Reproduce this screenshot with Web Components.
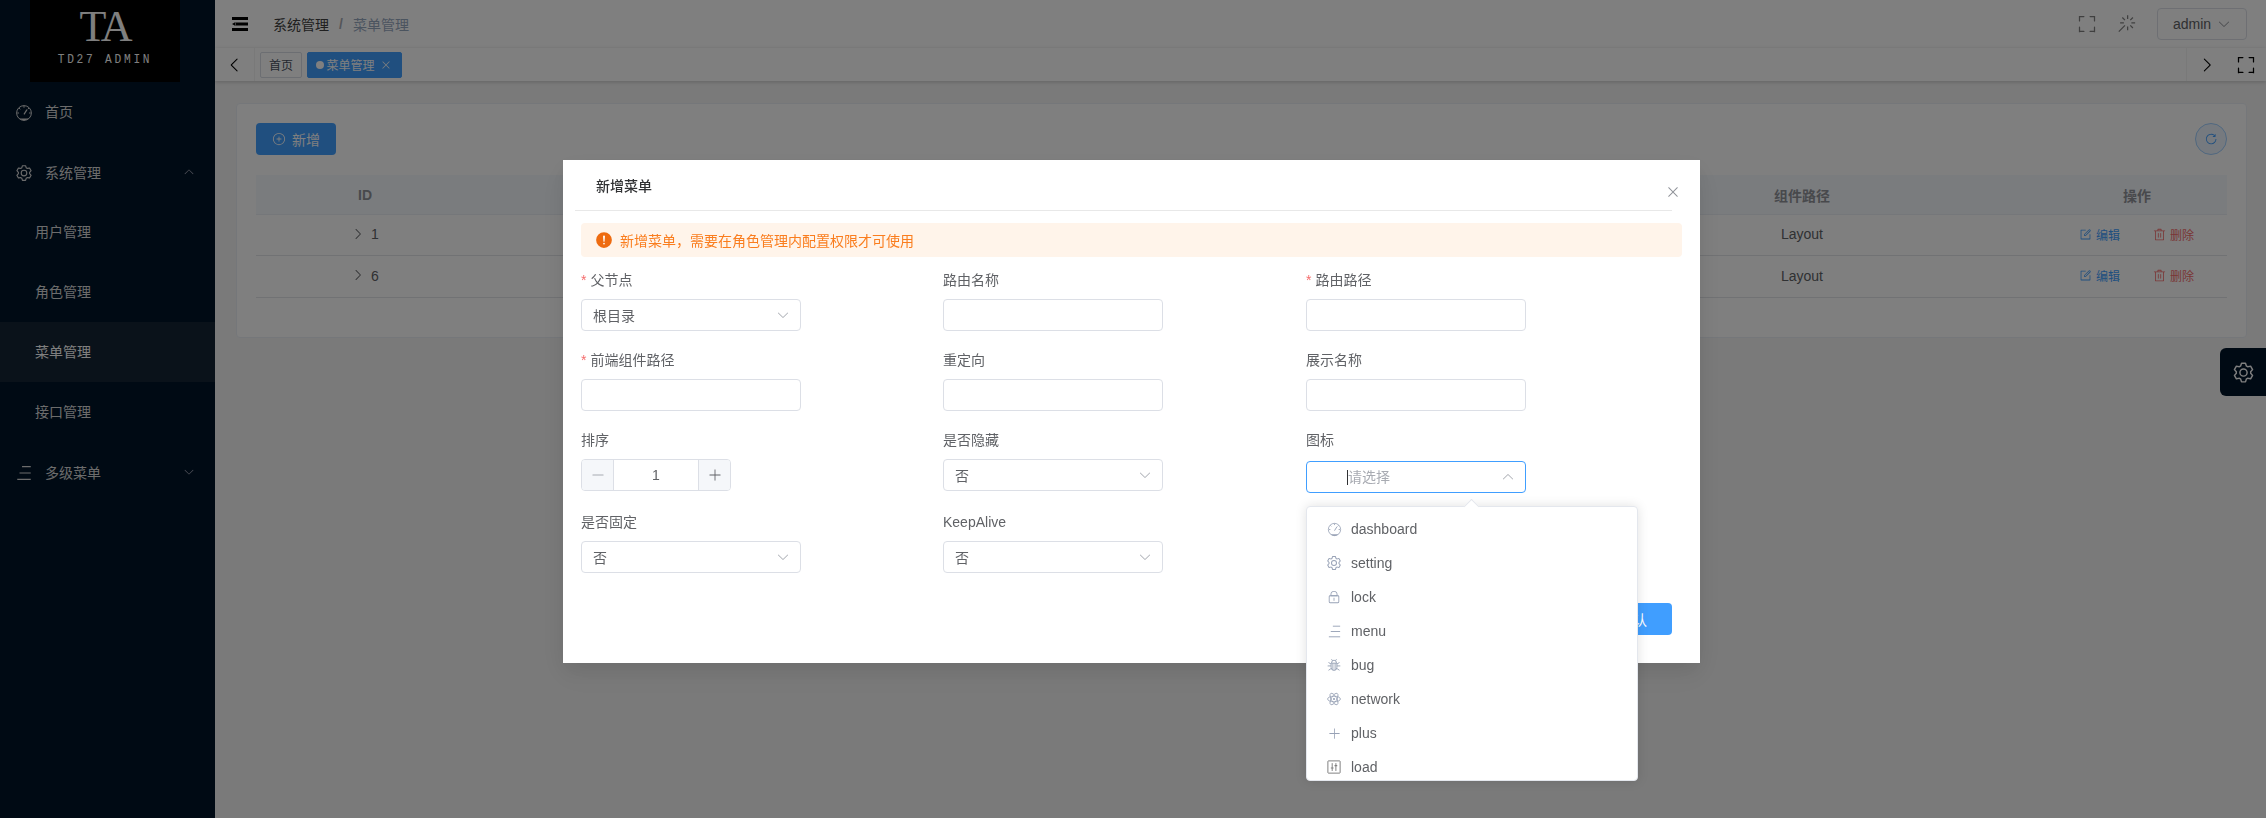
<!DOCTYPE html>
<html lang="zh">
<head>
<meta charset="utf-8">
<title>菜单管理</title>
<style>
  html, body { margin: 0; height: 818px; overflow: hidden; background: #f5f5f5; }
  body { font: 14px "Liberation Sans", "Noto Sans CJK SC", sans-serif; color: #606266; }
</style>
</head>
<body>
<app-shell>
  <side-menu slot="side"></side-menu>
  <nav-bar slot="main"></nav-bar>
  <tab-strip slot="main"></tab-strip>
  <menu-table slot="main"></menu-table>
</app-shell>
<settings-tab></settings-tab>
<modal-layer>
  <form-field label="父节点" required><select-box value="根目录"></select-box></form-field>
  <form-field label="路由名称"><text-box></text-box></form-field>
  <form-field label="路由路径" required><text-box></text-box></form-field>
  <form-field label="前端组件路径" required><text-box></text-box></form-field>
  <form-field label="重定向"><text-box></text-box></form-field>
  <form-field label="展示名称"><text-box></text-box></form-field>
  <form-field label="排序" tall><number-box value="1"></number-box></form-field>
  <form-field label="是否隐藏" tall><select-box value="否"></select-box></form-field>
  <form-field label="图标" tall><select-box placeholder="请选择" open></select-box></form-field>
  <form-field label="是否固定"><select-box value="否"></select-box></form-field>
  <form-field label="KeepAlive"><select-box value="否"></select-box></form-field>
</modal-layer>
<script>
const ICONS = {
  odometer: `<g fill="none" stroke="currentColor" stroke-width="56"><circle cx="512" cy="512" r="420"/><path d="M512 100v110M130 512h100M794 512h100M230 230l70 70M794 230l-70 70"/><path stroke-width="64" d="M512 590 680 320"/></g><path d="M238 830a420 420 0 0 0 548 0z"/>`,
  setting: `<path d="M600.704 64a32 32 0 0 1 30.464 22.208l35.2 109.376c14.784 7.232 28.928 15.36 42.432 24.512l112.384-24.192a32 32 0 0 1 34.432 15.36L944.32 364.8a32 32 0 0 1-4.032 37.504l-77.12 85.12a357.12 357.12 0 0 1 0 49.024l77.12 85.248a32 32 0 0 1 4.032 37.504l-88.704 153.6a32 32 0 0 1-34.432 15.296L708.8 803.904c-13.44 9.088-27.648 17.28-42.368 24.512l-35.264 109.376A32 32 0 0 1 600.704 960H423.296a32 32 0 0 1-30.464-22.208L357.696 828.48a351.616 351.616 0 0 1-42.56-24.64l-112.32 24.256a32 32 0 0 1-34.432-15.36L79.68 659.2a32 32 0 0 1 4.032-37.504l77.12-85.248a357.12 357.12 0 0 1 0-48.896l-77.12-85.248A32 32 0 0 1 79.68 364.8l88.704-153.6a32 32 0 0 1 34.432-15.296l112.32 24.256c13.568-9.152 27.776-17.408 42.56-24.64l35.2-109.312A32 32 0 0 1 423.232 64H600.64zm-23.424 64H446.72l-36.352 113.088-24.512 11.968a294.113 294.113 0 0 0-34.816 20.096l-22.656 15.36-116.224-25.088-65.28 113.152 79.68 88.192-1.92 27.136a293.12 293.12 0 0 0 0 40.192l1.92 27.136-79.808 88.192 65.344 113.152 116.224-25.024 22.656 15.296a294.113 294.113 0 0 0 34.816 20.096l24.512 11.968L446.72 896h130.688l36.48-113.152 24.448-11.904a288.282 288.282 0 0 0 34.752-20.096l22.592-15.296 116.288 25.024 65.28-113.152-79.744-88.192 1.92-27.136a293.12 293.12 0 0 0 0-40.256l-1.92-27.136 79.808-88.128-65.344-113.152-116.288 24.96-22.592-15.232a287.616 287.616 0 0 0-34.752-20.096l-24.448-11.904L577.344 128zM512 320a192 192 0 1 1 0 384 192 192 0 0 1 0-384zm0 64a128 128 0 1 0 0 256 128 128 0 0 0 0-256z"/>`,
  down: `<path d="M831.872 340.864 512 652.672 192.128 340.864a30.592 30.592 0 0 0-42.752 0 29.12 29.12 0 0 0 0 41.6L489.664 714.24a32 32 0 0 0 44.672 0l340.288-331.712a29.12 29.12 0 0 0 0-41.728 30.592 30.592 0 0 0-42.752 0z"/>`,
  up: `<path transform="rotate(180 512 512)" d="M831.872 340.864 512 652.672 192.128 340.864a30.592 30.592 0 0 0-42.752 0 29.12 29.12 0 0 0 0 41.6L489.664 714.24a32 32 0 0 0 44.672 0l340.288-331.712a29.12 29.12 0 0 0 0-41.728 30.592 30.592 0 0 0-42.752 0z"/>`,
  left: `<path d="M609.408 149.376 277.76 489.6a32 32 0 0 0 0 44.672l331.648 340.352a29.12 29.12 0 0 0 41.728 0 30.592 30.592 0 0 0 0-42.752L339.264 511.936l311.872-319.872a30.592 30.592 0 0 0 0-42.688 29.12 29.12 0 0 0-41.728 0z"/>`,
  right: `<path d="M340.864 149.312a30.592 30.592 0 0 0 0 42.752L652.736 512 340.864 831.872a30.592 30.592 0 0 0 0 42.752 29.12 29.12 0 0 0 41.728 0L714.24 534.336a32 32 0 0 0 0-44.672L382.592 149.376a29.12 29.12 0 0 0-41.728 0z"/>`,
  close: `<path d="M764.288 214.592 512 466.88 259.712 214.592a31.936 31.936 0 0 0-45.12 45.12L466.752 512 214.528 764.224a31.936 31.936 0 1 0 45.12 45.184L512 557.184l252.288 252.288a31.936 31.936 0 0 0 45.12-45.12L557.12 512.064l252.288-252.352a31.936 31.936 0 1 0-45.12-45.184z"/>`,
  full: `<path d="m160 96.064 192 .192a32 32 0 0 1 0 64l-192-.192V352a32 32 0 0 1-64 0V96h64v.064zm0 831.872V928H96V672a32 32 0 1 1 64 0v191.936l192-.192a32 32 0 1 1 0 64l-192 .192zM864 96.064V96h64v256a32 32 0 1 1-64 0V160.064l-192 .192a32 32 0 1 1 0-64l192-.192zm0 831.872-192-.192a32 32 0 0 1 0-64l192 .192V672a32 32 0 1 1 64 0v256h-64v-.064z"/>`,
  wand: `<path d="M512 64h64v192h-64V64zm0 576h64v192h-64V640zM160 480v-64h192v64H160zm576 0v-64h192v64H736zM249.856 199.04l45.248-45.184L430.848 289.6 385.6 334.848 249.856 199.104zM657.152 606.4l45.248-45.248 135.744 135.744-45.248 45.248L657.152 606.4zM114.048 923.2 68.8 877.952l316.8-316.8 45.248 45.248-316.8 316.8zM702.4 334.848 657.152 289.6l135.744-135.744 45.248 45.248L702.4 334.848z"/>`,
  circleplus: `<path d="M352 480h320a32 32 0 1 1 0 64H352a32 32 0 0 1 0-64z"/><path d="M480 672V352a32 32 0 1 1 64 0v320a32 32 0 0 1-64 0z"/><path d="M512 896a384 384 0 1 0 0-768 384 384 0 0 0 0 768zm0 64a448 448 0 1 1 0-896 448 448 0 0 1 0 896z"/>`,
  refresh: `<path d="M784.512 230.272v-50.56a32 32 0 1 1 64 0v149.056a32 32 0 0 1-32 32H667.52a32 32 0 1 1 0-64h92.992A320 320 0 1 0 524.8 833.152a320 320 0 0 0 320-320h64a384 384 0 0 1-384 384 384 384 0 0 1-384-384 384 384 0 0 1 643.712-282.88z"/>`,
  edit: `<path d="M832 512a32 32 0 1 1 64 0v352a32 32 0 0 1-32 32H160a32 32 0 0 1-32-32V160a32 32 0 0 1 32-32h352a32 32 0 0 1 0 64H192v640h640V512z"/><path d="m469.952 554.24 52.8-7.552L847.104 222.4a32 32 0 1 0-45.248-45.248L477.44 501.44l-7.552 52.8zm422.4-422.4a96 96 0 0 1 0 135.808l-331.84 331.84a32 32 0 0 1-18.112 9.088L436.8 623.68a32 32 0 0 1-36.224-36.224l15.104-105.6a32 32 0 0 1 9.024-18.112l331.904-331.84a96 96 0 0 1 135.744 0z"/>`,
  trash: `<path d="M160 256H96a32 32 0 0 1 0-64h256V95.936a32 32 0 0 1 32-32h256a32 32 0 0 1 32 32V192h256a32 32 0 1 1 0 64h-64v672a32 32 0 0 1-32 32H192a32 32 0 0 1-32-32V256zm448-64v-64H416v64h192zM224 896h576V256H224v640zm192-128a32 32 0 0 1-32-32V416a32 32 0 0 1 64 0v320a32 32 0 0 1-32 32zm192 0a32 32 0 0 1-32-32V416a32 32 0 0 1 64 0v320a32 32 0 0 1-32 32z"/>`,
  lock: `<path d="M224 448a32 32 0 0 0-32 32v384a32 32 0 0 0 32 32h576a32 32 0 0 0 32-32V480a32 32 0 0 0-32-32H224zm0-64h576a96 96 0 0 1 96 96v384a96 96 0 0 1-96 96H224a96 96 0 0 1-96-96V480a96 96 0 0 1 96-96z"/><path d="M512 544a32 32 0 0 1 32 32v192a32 32 0 1 1-64 0V576a32 32 0 0 1 32-32zm192-160v-64a192 192 0 1 0-384 0v64h384zM512 64a256 256 0 0 1 256 256v128H256V320A256 256 0 0 1 512 64z"/>`,
  plus: `<path d="M480 480V128a32 32 0 0 1 64 0v352h352a32 32 0 0 1 0 64H544v352a32 32 0 1 1-64 0V544H128a32 32 0 0 1 0-64h352z"/>`,
  minus: `<path d="M128 544h768a32 32 0 1 0 0-64H128a32 32 0 0 0 0 64z"/>`,
  warning: `<path d="M512 64a448 448 0 1 1 0 896 448 448 0 0 1 0-896zm0 192a58.432 58.432 0 0 0-58.24 63.744l23.36 256.384a35.072 35.072 0 0 0 69.76 0l23.296-256.384A58.432 58.432 0 0 0 512 256zm0 512a51.2 51.2 0 1 0 0-102.4 51.2 51.2 0 0 0 0 102.4z"/>`,
  menu: `<path fill="none" stroke="currentColor" stroke-width="64" d="M400 150H896M256 512H896M128 874H896"/>`,
  bug: `<g fill="none" stroke="currentColor" stroke-width="68"><path d="M300 380h424v300a212 230 0 0 1-424 0z"/><path d="M330 380a182 220 0 0 1 364 0M430 380v500M594 380v500M300 580H50M724 580h250M300 440 110 330M724 440l190-110M310 760 110 900M714 760l200 140M400 200 330 90M624 200l70-110"/></g>`,
  network: `<g fill="none" stroke="currentColor" stroke-width="60"><ellipse cx="512" cy="512" rx="470" ry="200"/><ellipse cx="512" cy="512" rx="470" ry="200" transform="rotate(60 512 512)"/><ellipse cx="512" cy="512" rx="470" ry="200" transform="rotate(120 512 512)"/></g><circle cx="512" cy="512" r="80"/>`,
  load: `<g fill="none" stroke="currentColor" stroke-width="72"><rect x="64" y="64" width="896" height="896" rx="40"/><path d="M380 230V800M650 230V800"/></g><path d="M280 540h200v90H280zM550 370h200v90H550z"/>`
};

class UiIcon extends HTMLElement {
  connectedCallback() {
    const size = this.getAttribute("size") || 14;
    this.attachShadow({ mode: "open" }).innerHTML = `
      <style>:host { display: inline-flex; flex: none; } svg { display: block; fill: currentColor; }</style>
      <svg width="${size}" height="${size}" viewBox="0 0 1024 1024">${ICONS[this.getAttribute("name")]}</svg>`;
  }
}
customElements.define("ui-icon", UiIcon);

const shellTemplate = document.createElement("template");
shellTemplate.innerHTML = `
  <style>
    :host { display: flex; height: 818px; }
    .side { width: 215px; flex: none; background: #001529; }
    .main { flex: 1; min-width: 0; display: flex; flex-direction: column; }
  </style>
  <div class="side"><slot name="side"></slot></div>
  <div class="main"><slot name="main"></slot></div>`;
class AppShell extends HTMLElement {
  connectedCallback() {
    this.attachShadow({ mode: "open" }).appendChild(shellTemplate.content.cloneNode(true));
  }
}
customElements.define("app-shell", AppShell);

class SideMenu extends HTMLElement {
  connectedCallback() {
    const rows = [
      ["odometer", "首页", "", false, false],
      ["setting", "系统管理", "up", false, false],
      ["", "用户管理", "", true, false],
      ["", "角色管理", "", true, false],
      ["", "菜单管理", "", true, true],
      ["", "接口管理", "", true, false],
      ["menu", "多级菜单", "down", false, false]
    ];
    this.attachShadow({ mode: "open" }).innerHTML = `
      <style>
        :host { display: block; }
        .logo { width: 150px; height: 82px; margin-left: 30px; background: #000; color: #fff;
          display: flex; flex-direction: column; align-items: center; overflow: hidden; }
        .ta { font: 44px/34px "Liberation Serif", serif; margin-top: 10px; letter-spacing: -2px; }
        .sub { font: 13px/14px "Liberation Mono", monospace; letter-spacing: 3.2px; margin-top: 9px; transform: scaleX(.86); white-space: nowrap; }
        .row { height: 60px; display: flex; align-items: center; color: #d8d8d8; position: relative; }
        .row span { position: relative; top: -1px; }
        .row.drop span { top: 0; }
        .row ui-icon { margin: 2px 12px 0 15px; }
        .row.sub-row { padding-left: 35px; }
        .row.on { background: #142434; color: #fff; }
        .row .arrow { margin: 0; position: absolute; right: 20px; top: 24px; color: #aab; }
      </style>
      <div class="logo"><div class="ta">TA</div><div class="sub">TD27 ADMIN</div></div>
      ${rows.map(([icon, text, arrow, sub, on]) => `
        <div class="row ${sub ? "sub-row" : ""} ${on ? "on" : ""} ${arrow ? "drop" : ""}">
          ${icon ? `<ui-icon name="${icon}" size="18"></ui-icon>` : ""}
          <span>${text}</span>
          ${arrow ? `<ui-icon class="arrow" name="${arrow}" size="12"></ui-icon>` : ""}
        </div>`).join("")}`;
  }
}
customElements.define("side-menu", SideMenu);

class NavBar extends HTMLElement {
  connectedCallback() {
    this.attachShadow({ mode: "open" }).innerHTML = `
      <style>
        :host { display: flex; height: 48px; align-items: center; background: #fff; padding: 0 19px 0 17px; }
        .fold { margin-right: 25px; }
        .fold svg { display: block; }
        .now { color: #404040; }
        .sep { margin: 0 10px; color: #a8abb2; font-weight: 700; }
        .last { color: #97a8be; }
        .gap { flex: 1; }
        .tool { color: #808080; }
        .user { width: 90px; height: 32px; box-sizing: border-box; border: 1px solid #dcdfe6; border-radius: 4px;
          display: flex; align-items: center; justify-content: center; gap: 6px; margin-left: 20px; color: #606266; }
      </style>
      <div class="fold"><svg width="16" height="14" viewBox="0 0 16 14"><path fill="#000" d="M0 0h16v3H0zM0 11h16v3H0zM4 5.500h12v3H4zM0 7l3.500-2v4z"/></svg></div>
      <span class="now">系统管理</span><span class="sep">/</span><span class="last">菜单管理</span>
      <span class="gap"></span>
      <ui-icon class="tool" name="full" size="20" style="margin-right:20px"></ui-icon>
      <ui-icon class="tool" name="wand" size="20"></ui-icon>
      <div class="user">admin<ui-icon name="down" size="14" style="color:#909399"></ui-icon></div>`;
  }
}
customElements.define("nav-bar", NavBar);

class TabStrip extends HTMLElement {
  connectedCallback() {
    this.attachShadow({ mode: "open" }).innerHTML = `
      <style>
        :host { display: flex; height: 33px; align-items: center; background: #fff; font-size: 12px;
          box-shadow: 0 1px 4px rgba(0,0,0,.2); position: relative; }
        .end { width: 40px; height: 33px; display: flex; align-items: center; justify-content: center; color: #000; flex: none; }
        .end.l { border-right: 1px solid #f2f2f2; box-sizing: border-box; margin-right: 5px; }
        .tab { height: 26px; box-sizing: border-box; border: 1px solid #d8dce5; display: flex; align-items: center;
          justify-content: center; width: 42px; margin-right: 5px; color: #495060; border-radius: 2px; }
        .tab.on { width: 95px; background: #409eff; border-color: #409eff; color: #fff; }
        .dot { width: 8px; height: 8px; border-radius: 50%; background: #fff; margin-right: 2px; }
        .gap { flex: 1; }
        .end.r { border-left: 1px solid #f2f2f2; box-sizing: border-box; }
      </style>
      <div class="end l"><ui-icon name="left" size="18"></ui-icon></div>
      <div class="tab">首页</div>
      <div class="tab on"><span class="dot"></span>菜单管理<ui-icon name="close" size="12" style="margin-left:5px;margin-right:1px"></ui-icon></div>
      <span class="gap"></span>
      <div class="end r"><ui-icon name="right" size="18"></ui-icon></div>
      <div class="end"><ui-icon name="full" size="20"></ui-icon></div>`;
  }
}
customElements.define("tab-strip", TabStrip);

class MenuTable extends HTMLElement {
  connectedCallback() {
    const row = (id, h) => `
      <div class="row" style="height:${h}px">
        <div class="c id"><ui-icon name="right" size="14"></ui-icon><span>${id}</span></div>
        <div></div>
        <div class="c"><span>Layout</span></div>
        <div class="c ops">
          <span class="op blue"><ui-icon name="edit" size="13"></ui-icon>编辑</span>
          <span class="op red"><ui-icon name="trash" size="13"></ui-icon>删除</span>
        </div>
      </div>`;
    this.attachShadow({ mode: "open" }).innerHTML = `
      <style>
        :host { display: block; margin: 22px 19px 0 21px; background: #fff; border: 1px solid #ebeef5; border-radius: 4px;
          box-sizing: border-box; height: 235px; padding: 19px 19px 0; }
        .top { display: flex; justify-content: space-between; align-items: center; margin-bottom: 20px; }
        .add { width: 80px; height: 32px; border-radius: 4px; background: #409eff; color: #fff; display: flex;
          align-items: center; justify-content: center; gap: 6px; }
        .reload { width: 32px; height: 32px; box-sizing: border-box; border: 1px solid #a0cfff; background: #ecf5ff;
          border-radius: 50%; color: #409eff; display: flex; align-items: center; justify-content: center; }
        .row { display: grid; grid-template-columns: 218px 1fr 490px 180px; border-bottom: 1px solid #e2e4e8; box-sizing: border-box; }
        .head { height: 40px; background: #f5f8fd; font-weight: 700; border-bottom-color: #ebeef5; }
        .c { display: flex; align-items: center; justify-content: center; color: #606266; }
        .c span { position: relative; top: -1px; }
        .head .c { color: #909399; }
        .id { gap: 6px; }
        .id ui-icon { margin-top: -3px; }
        .ops { gap: 33px; font-size: 12px; justify-content: flex-start; padding-left: 32px; }
        .op { display: flex; align-items: center; gap: 4px; }
        .blue { color: #409eff; }
        .red { color: #f56c6c; }
      </style>
      <div class="top">
        <div class="add"><ui-icon name="circleplus" size="14"></ui-icon>新增</div>
        <div class="reload"><ui-icon name="refresh" size="14"></ui-icon></div>
      </div>
      <div class="row head"><div class="c">ID</div><div></div><div class="c">组件路径</div><div class="c">操作</div></div>
      ${row(1, 41)}${row(6, 42)}`;
  }
}
customElements.define("menu-table", MenuTable);

class SettingsTab extends HTMLElement {
  connectedCallback() {
    this.attachShadow({ mode: "open" }).innerHTML = `
      <style>
        :host { position: fixed; right: 0; top: 348px; width: 46px; height: 48px; background: #001529; color: #fff;
          border-radius: 6px 0 0 6px; display: flex; align-items: center; justify-content: center; }
      </style>
      <ui-icon name="setting" size="23"></ui-icon>`;
  }
}
customElements.define("settings-tab", SettingsTab);

class FormField extends HTMLElement {
  connectedCallback() {
    const star = this.hasAttribute("required") ? `<i>*</i>` : "";
    this.attachShadow({ mode: "open" }).innerHTML = `
      <style>
        :host { display: block; margin-bottom: ${this.hasAttribute("tall") ? 20 : 18}px; }
        label { display: block; height: 22px; line-height: 22px; margin-bottom: 8px; color: #606266; white-space: nowrap; }
        i { font-style: normal; color: #f56c6c; margin-right: 4px; }
      </style>
      <label>${star}${this.getAttribute("label")}</label>
      <slot></slot>`;
  }
}
customElements.define("form-field", FormField);

class SelectBox extends HTMLElement {
  connectedCallback() {
    const open = this.hasAttribute("open");
    const value = this.getAttribute("value");
    this.attachShadow({ mode: "open" }).innerHTML = `
      <style>
        :host { display: flex; width: 220px; height: 32px; box-sizing: border-box; border: 1px solid ${open ? "#409eff" : "#dcdfe6"};
          border-radius: 4px; align-items: center; padding: ${open ? "0 10px 0 40px" : "0 10px 0 11px"}; background: #fff;
          ${open ? "margin: 10px 0 -2px;" : ""} }
        .v { flex: 1; color: #606266; }
        .p { color: #a8abb2; border-left: 1px solid #303133; line-height: 15px; height: 15px; display: inline-flex; align-items: center; }
        ui-icon { color: #a8abb2; }
      </style>
      <span class="v">${value ? value : `<span class="p">${this.getAttribute("placeholder")}</span>`}</span>
      <ui-icon name="${open ? "up" : "down"}" size="14"></ui-icon>`;
  }
}
customElements.define("select-box", SelectBox);

class TextBox extends HTMLElement {
  connectedCallback() {
    this.attachShadow({ mode: "open" }).innerHTML = `
      <style>
        :host { display: block; width: 220px; height: 32px; box-sizing: border-box; border: 1px solid #dcdfe6; border-radius: 4px; background: #fff; }
      </style>`;
  }
}
customElements.define("text-box", TextBox);

class NumberBox extends HTMLElement {
  connectedCallback() {
    this.attachShadow({ mode: "open" }).innerHTML = `
      <style>
        :host { display: flex; width: 150px; height: 32px; box-sizing: border-box; border: 1px solid #dcdfe6; border-radius: 4px; overflow: hidden; }
        .b { width: 32px; box-sizing: border-box; background: #f5f7fa; display: flex; align-items: center; justify-content: center; flex: none; color: #606266; }
        .b.m { border-right: 1px solid #dcdfe6; color: #a8abb2; }
        .b.p { border-left: 1px solid #dcdfe6; }
        .n { flex: 1; text-align: center; line-height: 30px; color: #606266; }
      </style>
      <div class="b m"><ui-icon name="minus" size="14"></ui-icon></div>
      <div class="n">${this.getAttribute("value")}</div>
      <div class="b p"><ui-icon name="plus" size="14"></ui-icon></div>`;
  }
}
customElements.define("number-box", NumberBox);

class ModalLayer extends HTMLElement {
  connectedCallback() {
    const options = [["dashboard", "odometer", 15, "#98a2b6"], ["setting", "setting", 16, "#98a2b6"], ["lock", "lock", 14, "#98a2b6"], ["menu", "menu", 15, "#98a2b6"],
      ["bug", "bug", 14, "#98a2b6"], ["network", "network", 14, "#98a2b6"], ["plus", "plus", 13, "#98a2b6"], ["load", "load", 14, "#808080"]];
    this.attachShadow({ mode: "open" }).innerHTML = `
      <style>
        :host { position: fixed; inset: 0; background: rgba(0,0,0,.5); display: block; }
        .dlg { position: absolute; left: 563px; top: 160px; width: 1137px; height: 503px; background: #fff; box-sizing: border-box;
          box-shadow: 0 12px 32px 4px rgba(0,0,0,.04), 0 8px 20px rgba(0,0,0,.08); display: flex; flex-direction: column; }
        .head { margin: 0 28px 0 12px; height: 50.500px; box-sizing: border-box; border-bottom: 1px solid #e8e8e8; padding-left: 21px;
          display: flex; align-items: center; font-weight: 500; color: #303133; }
        .x { position: absolute; left: 1102px; top: 24px; color: #909399; }
        .body { padding: 12.500px 18px 0; flex: 1; }
        .alert { height: 34px; background: #fff4ea; border-radius: 4px; display: flex; align-items: center; gap: 7px; padding-left: 14px;
          color: #fa7d1e; margin-bottom: 12px; }
        .alert ui-icon { color: #ee6b10; }
        .grid { display: grid; grid-template-columns: 362px 363px 362px; }
        .foot { display: flex; justify-content: flex-end; padding: 0 28px 28px; }
        .ok { width: 68px; height: 32px; box-sizing: border-box; border-radius: 4px; background: #409eff; color: #fff; display: flex; align-items: center;
          justify-content: flex-end; padding-right: 25px; white-space: pre; }
        .drop { position: absolute; left: 1306px; top: 506px; width: 332px; height: 275px; background: #fff; border: 1px solid #e4e7ed; box-sizing: border-box;
          border-radius: 4px; box-shadow: 0 0 12px rgba(0,0,0,.12); }
        .drop::before { content: ""; position: absolute; left: 159px; top: -6px; width: 10px; height: 10px; background: #fff;
          border: 1px solid #e4e7ed; border-right: 0; border-bottom: 0; transform: rotate(45deg); }
        .list { position: relative; height: 273px; overflow: hidden; padding-top: 5px; box-sizing: border-box; }
        .opt { height: 34px; display: flex; align-items: center; padding-left: 19px; color: #606266; }
        .ic { width: 16px; display: flex; justify-content: center; margin-right: 9px; }
      </style>
      <div class="dlg">
        <div class="head">新增菜单</div>
        <ui-icon class="x" name="close" size="16"></ui-icon>
        <div class="body">
          <div class="alert"><ui-icon name="warning" size="18"></ui-icon>新增菜单，需要在角色管理内配置权限才可使用</div>
          <div class="grid"><slot></slot></div>
        </div>
        <div class="foot"><div class="ok">确 认</div></div>
      </div>
      <div class="drop"><div class="list">
        ${options.map(([t, i, s, c]) => `<div class="opt"><span class="ic" style="color:${c}"><ui-icon name="${i}" size="${s}"></ui-icon></span>${t}</div>`).join("")}
      </div></div>`;
  }
}
customElements.define("modal-layer", ModalLayer);
</script>
</body>
</html>
